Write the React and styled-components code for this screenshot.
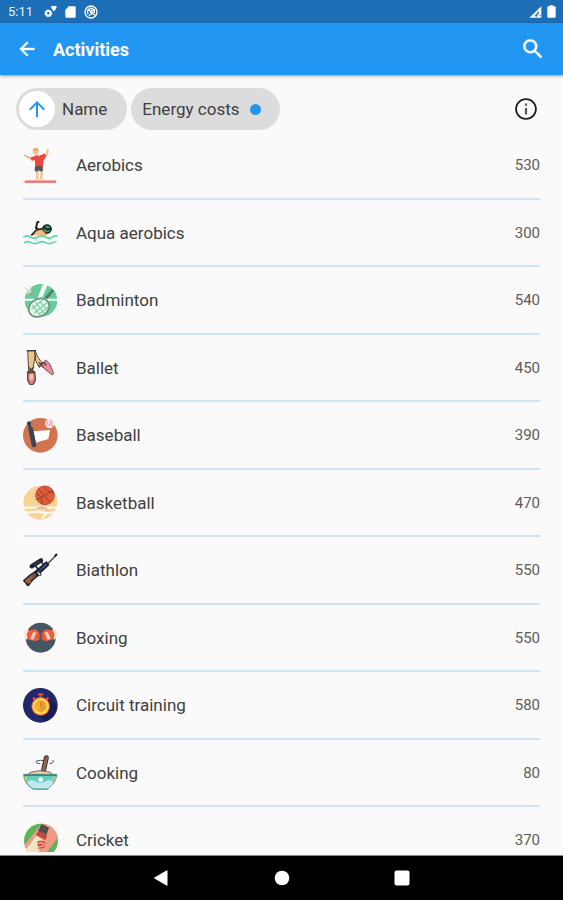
import React from "react";
import styled, { createGlobalStyle } from "styled-components";

const ACTIVITIES = [
  { name: "Aerobics", energy: 530, icon: AerobicsIcon },
  { name: "Aqua aerobics", energy: 300, icon: AquaIcon },
  { name: "Badminton", energy: 540, icon: BadmintonIcon },
  { name: "Ballet", energy: 450, icon: BalletIcon },
  { name: "Baseball", energy: 390, icon: BaseballIcon },
  { name: "Basketball", energy: 470, icon: BasketballIcon },
  { name: "Biathlon", energy: 550, icon: BiathlonIcon },
  { name: "Boxing", energy: 550, icon: BoxingIcon },
  { name: "Circuit training", energy: 580, icon: CircuitIcon },
  { name: "Cooking", energy: 80, icon: CookingIcon },
  { name: "Cricket", energy: 370, icon: CricketIcon },
];

export default function App() {
  return (
    <Screen>
      <GlobalStyle />
      <StatusBar>
        <Clock>5:11</Clock>
        <GearsIcon />
        <SdCardIcon />
        <BlockedIcon />
        <Spacer />
        <SignalIcon />
        <BatteryIcon />
      </StatusBar>
      <AppBar>
        <IconButton type="button" aria-label="Back">
          <svg width="22" height="22" viewBox="0 0 24 24" fill="currentColor" stroke="currentColor" strokeWidth="0.5">
            <path d="M20 11H7.83l5.59-5.59L12 4l-8 8 8 8 1.41-1.41L7.83 13H20v-2z" />
          </svg>
        </IconButton>
        <Title>Activities</Title>
        <IconButton type="button" aria-label="Search">
          <svg width="26" height="26" viewBox="0 0 24 24" fill="currentColor" stroke="currentColor" strokeWidth="0.3">
            <path d="M15.5 14h-.79l-.28-.27A6.471 6.471 0 0 0 16 9.5 6.5 6.5 0 1 0 9.5 16c1.61 0 3.09-.59 4.23-1.57l.27.28v.79l5 4.99L20.49 19l-4.99-5zm-6 0C7.01 14 5 11.99 5 9.5S7.01 5 9.5 5 14 7.01 14 9.5 11.99 14 9.5 14z" />
          </svg>
        </IconButton>
      </AppBar>
      <Filters>
        <Chip type="button" $avatar>
          <ChipAvatar>
            <svg width="24" height="24" viewBox="0 0 24 24" fill="currentColor">
              <path d="M4 12l1.41 1.41L11 7.83V20h2V7.83l5.58 5.59L20 12l-8-8-8 8z" />
            </svg>
          </ChipAvatar>
          Name
        </Chip>
        <Chip type="button">
          Energy costs
          <Dot />
        </Chip>
        <Spacer />
        <IconButton type="button" aria-label="Information" $dark>
          <svg width="26" height="26" viewBox="0 0 24 24" fill="currentColor">
            <path d="M11 7h2v2h-2zm0 4h2v6h-2z" fill="#555" />
            <path d="M12 2C6.48 2 2 6.48 2 12s4.48 10 10 10 10-4.480 10-10S17.520 2 12 2zm0 18.300c-4.600 0-8.300-3.700-8.300-8.300s3.700-8.300 8.300-8.300 8.300 3.700 8.300 8.300-3.700 8.300-8.300 8.300z" />
          </svg>
        </IconButton>
      </Filters>
      <List>
        {ACTIVITIES.map(({ name, energy, icon: Icon }) => (
          <Row key={name}>
            <Icon />
            <Name>{name}</Name>
            <Energy>{energy}</Energy>
          </Row>
        ))}
      </List>
      <NavBar>
        <NavButton type="button" aria-label="Back">
          <svg width="18" height="18" viewBox="0 0 18 18" fill="#fff">
            <path d="M14.500 2v14q0 1-1 .5L1.500 9.600q-1-.6 0-1.200L13.500 1.500q1-.5 1 .5z" />
          </svg>
        </NavButton>
        <NavButton type="button" aria-label="Home">
          <svg width="18" height="18" viewBox="0 0 18 18" fill="#fff">
            <circle cx="9" cy="9" r="7.300" />
          </svg>
        </NavButton>
        <NavButton type="button" aria-label="Overview">
          <svg width="18" height="18" viewBox="0 0 18 18" fill="#fff">
            <rect x="1.500" y="1.500" width="15" height="15" rx="2" />
          </svg>
        </NavButton>
      </NavBar>
    </Screen>
  );
}

/* Status bar glyphs */

function GearsIcon() {
  return (
    <svg width="13" height="13" viewBox="0 0 39 39" fill="none" stroke="#fff">
      <circle cx="13" cy="25" r="7" strokeWidth="6" />
      <circle cx="13" cy="25" r="10.500" strokeWidth="3" strokeDasharray="5 4" />
      <path d="M21 4l14-1 3 3-4 8-5 4-5-7z" fill="#fff" strokeWidth="1" />
    </svg>
  );
}

function SdCardIcon() {
  return (
    <svg width="11" height="12" viewBox="0 0 33 36" fill="#fff">
      <path d="M11 1h18q3 0 3 3v28q0 3-3 3H4q-3 0-3-3V12z" />
    </svg>
  );
}

function BlockedIcon() {
  return (
    <svg width="14" height="14" viewBox="0 0 42 42" fill="none" stroke="#fff" strokeWidth="4">
      <circle cx="21" cy="21" r="18" />
      <path d="M11 11l22 20M11 27V17l7-5M17 9l14 5M31 24v-9l-9 3M14 31l9-4-4-7" />
    </svg>
  );
}

function SignalIcon() {
  return (
    <svg width="13" height="12" viewBox="0 0 39 36">
      <path d="M1 35L37 1v34z" fill="#fff" />
      <path d="M18 30L29 17v6l-5 3v5zM30 28h7" stroke="#1c6fb6" strokeWidth="2" fill="#1c6fb6" />
    </svg>
  );
}

function BatteryIcon() {
  return (
    <svg width="9" height="13" viewBox="0 0 27 39" fill="#fff">
      <path d="M8 1h11v3h4q3 0 3 3v28q0 3-3 3H4q-3 0-3-3V7q0-3 3-3h4z" />
    </svg>
  );
}

/* Activity pictures, all on a 105 unit square */

function Picture({ children }) {
  return (
    <svg width="35" height="35" viewBox="0 0 105 105" fill="none" aria-hidden="true">
      {children}
    </svg>
  );
}

function AerobicsIcon() {
  return (
    <Picture>
      <path d="M28 32L15 27 6 22M63 29l10-12 1-11" stroke="#f5b887" strokeWidth="6" strokeLinecap="round" />
      <path d="M42 67l1 28M56 67l-1 28" stroke="#f7bd8b" strokeWidth="7" />
      <path d="M36 96h13M52 96h12" stroke="#f7f1ea" strokeWidth="4" />
      <path d="M22 30l12-6 10-3h12l8-5 6 8-8 13-2 20H37l-2-21-9 2z" fill="#e84a40" />
      <path d="M43 20l5 7 5-7z" fill="#f7bd8b" />
      <path d="M36 55h23l1 15H49l-1-6-2 6H35z" fill="#55545a" />
      <rect x="30" y="1" width="16" height="19" rx="7" fill="#f8c392" />
      <path d="M29 8q0-8 9-8 9 0 9 8-9-3-18 0z" fill="#e8a16c" />
      <rect x="5" y="97" width="94" height="8" fill="#ee7f7c" />
    </Picture>
  );
}

function AquaIcon() {
  return (
    <Picture>
      <path d="M25 60l14-13 19-6 19 13-8 9-42-2z" fill="#f0bd83" />
      <path d="M45 42l-6-3 4-17 6-2" stroke="#232323" strokeWidth="6" />
      <path d="M25 61l15-16 18-4" stroke="#222" strokeWidth="5" />
      <circle cx="72" cy="42" r="12" fill="#3f9877" stroke="#1d2927" strokeWidth="5" />
      <path d="M62 35l10 9 13-3" stroke="#171d1d" strokeWidth="5" />
      <path d="M57 46l10 6-4 6z" fill="#e7a978" />
      <path d="M1 66q12-7 22 0t22 0 22 0 22 0q8-5 15-3M3 83q12-6 21 0t22 0 22 0 22 0q6-4 11-2" stroke="#63d5a8" strokeWidth="5" />
      <path d="M35 73l12 4M77 75l9-2" stroke="#b4e9d6" strokeWidth="4" />
    </Picture>
  );
}

function BadmintonIcon() {
  return (
    <Picture>
      <circle cx="54" cy="52" r="49" fill="#65cd98" />
      <path d="M0 50h104" stroke="#f8fffb" strokeWidth="6" />
      <path d="M61 0h15L57 45H44z" fill="#f8fffb" />
      <path d="M2 12l20-9 4 26-12 5z" fill="#f5f5f3" opacity="0.6" />
      <path d="M6 14l10 11M22 26l4 9" stroke="#e8b6a9" strokeWidth="3" />
      <circle cx="25" cy="32" r="4" fill="#cf8b76" />
      <path d="M69 45l21-24" stroke="#4d6c61" strokeWidth="8" />
      <path d="M72 40l15-17" stroke="#79978b" strokeWidth="3" />
      <ellipse cx="48" cy="74" rx="32" ry="26" transform="rotate(-32 48 74)" fill="#e9f8ef" stroke="#718d82" strokeWidth="5" />
      <path d="M28 66l24 31M37 58l27 33M49 54l22 26M25 79l34-28M33 91l41-33M47 95l28-23" stroke="#7cd4a8" strokeWidth="4" />
    </Picture>
  );
}

function BalletIcon() {
  return (
    <Picture>
      <path d="M14 2h22l-1 24-6 35H17z" fill="#efc48d" stroke="#5d4a3d" strokeWidth="3" />
      <path d="M36 2l9 20 14 20-10 11-11-21z" fill="#efc48d" stroke="#5d4a3d" strokeWidth="3" />
      <path d="M11 2h28" stroke="#45372f" strokeWidth="4" />
      <path d="M56 46l12-16 12 11 11 27q1 9-6 5L62 54z" fill="#e88ea0" stroke="#7a4a52" strokeWidth="3" />
      <path d="M47 48l14-11M47 37l14 15M62 36l8 10" stroke="#54372f" strokeWidth="4" />
      <path d="M14 66h21l2 24-6 12q-6 4-11 0l-6-12z" fill="#e08496" stroke="#633e45" strokeWidth="4" />
      <path d="M16 52l18 14M33 52L15 67M15 68h20" stroke="#573d36" strokeWidth="4" />
      <path d="M20 73h10l1 12-5 5-6-4z" fill="#f5c896" />
    </Picture>
  );
}

function BaseballIcon() {
  return (
    <Picture>
      <circle cx="52" cy="52" r="52" fill="#d37450" />
      <path d="M32 40l49-4-5 27-38 11z" fill="#fff" />
      <path d="M23 33l10 48" stroke="#3a4652" strokeWidth="14" strokeLinecap="round" />
      <path d="M17 15l6 20" stroke="#3a4652" strokeWidth="9" />
      <circle cx="18" cy="16" r="6" fill="#344550" />
      <circle cx="80" cy="17" r="14" fill="#f7e2e2" />
      <path d="M72 8q4 14-5 17M84 5q-3 14 8 22M76 22l8-5" stroke="#e596a3" strokeWidth="3" />
    </Picture>
  );
}

function BasketballIcon() {
  return (
    <Picture>
      <circle cx="52" cy="53" r="51" fill="#f8d394" />
      <path d="M2 68h100M10 83l36-3 28 5 25-4M58 100l11-15" stroke="#fff8ee" strokeWidth="7" />
      <path d="M38 69l16-5 14 1 9 9-22 5z" fill="#e5c0a9" />
      <path d="M46 74l11 3 9-5" stroke="#f6ded0" strokeWidth="4" />
      <circle cx="66" cy="31" r="28" fill="#df5c3c" stroke="#c04f39" strokeWidth="3" />
      <path d="M42 44l48-27M47 13q13 14 34 39M41 27q16 4 17 30M62 4q9 16 31 20" stroke="#97402f" strokeWidth="3" />
    </Picture>
  );
}

function BiathlonIcon() {
  return (
    <Picture>
      <path d="M71 35L101 5" stroke="#44434a" strokeWidth="4" />
      <path d="M95 10l7-7" stroke="#222" strokeWidth="6" />
      <path d="M2 83l20-18 20-12 9 10-21 17-14 18q-5 0-6-6z" fill="#7d4e37" stroke="#27201f" strokeWidth="4" />
      <path d="M8 88l20-18M12 79l12 11" stroke="#a56d50" strokeWidth="4" />
      <path d="M37 57l33-29 6 8-24 22-9 9z" fill="#2d4274" stroke="#17192a" strokeWidth="5" />
      <path d="M49 57l6 9-6 2-8-8" fill="#d9dadd" stroke="#39383b" strokeWidth="3" />
      <path d="M26 40l28-18" stroke="#20222c" strokeWidth="13" strokeLinecap="round" />
      <path d="M33 36l17-11" stroke="#4b5260" strokeWidth="3" />
      <path d="M38 39l7 10M55 27l8 10" stroke="#242529" strokeWidth="5" />
      <path d="M57 46l15-14" stroke="#3e5b9c" strokeWidth="4" />
    </Picture>
  );
}

function BoxingIcon() {
  return (
    <Picture>
      <circle cx="53" cy="53" r="45" fill="#465663" />
      <path d="M0 38l13-14 9 15-10 21-8-10zM105 38L92 24l-9 15 10 21 8-10z" fill="#fbe9dd" />
      <path d="M17 31l22-3 12 13v16l-12 7-25-6-3-16z" fill="#ed5f40" />
      <path d="M89 31l-22-3-12 13v16l12 7 25-6 3-16z" fill="#ed5f40" />
      <path d="M30 37l-8 20 9 2 9-22zM65 37l9 22 9-2-8-20z" fill="#fbd3c4" />
      <path d="M50 37l-3 20M56 37l3 20" stroke="#a94437" strokeWidth="3" />
    </Picture>
  );
}

function CircuitIcon() {
  return (
    <Picture>
      <circle cx="52" cy="52" r="52" fill="#20286b" />
      <path d="M72 28l30 27q-3 33-34 45L33 77z" fill="#181d55" />
      <path d="M45 19h16M53 18v13M30 29l7 7M76 29l-7 7" stroke="#dc493c" strokeWidth="7" />
      <circle cx="53" cy="55" r="28" fill="#e9573b" />
      <circle cx="53" cy="55" r="25" fill="#ffd957" />
      <circle cx="53" cy="55" r="18" fill="#f5aa30" />
      <path d="M53 38v34q14-3 15-17-1-14-15-17z" fill="#e99a2c" />
      <path d="M53 43v14" stroke="#b8752c" strokeWidth="3" />
    </Picture>
  );
}

function CookingIcon() {
  return (
    <Picture>
      <path d="M38 19q13-6 32-1M88 15q10 7-8 11M42 21q-6 4 10 5" stroke="#4f5459" strokeWidth="3" />
      <path d="M70 8l-8 36" stroke="#3d3430" strokeWidth="15" strokeLinecap="round" />
      <path d="M70 9l-8 35" stroke="#8f6552" strokeWidth="9" strokeLinecap="round" />
      <path d="M14 59q8-10 25-10 10-5 22 0 21-1 29 10z" fill="#efcdaa" stroke="#79675a" strokeWidth="3" />
      <path d="M2 58h99q-1 23-22 39l-6 6H31l-8-6Q3 83 2 58z" fill="#62cfc0" stroke="#5f8985" strokeWidth="3" />
      <path d="M12 80q13-8 27 0 13 6 26 0 15-8 27 0-6 14-19 20H33q-15-6-21-20z" fill="#c4e6f1" />
      <path d="M3 61h97" stroke="#3d837c" strokeWidth="4" />
      <circle cx="53" cy="74" r="7" fill="#f5ffff" />
      <path d="M7 66l3 10M96 66l-3 10" stroke="#edbe4f" strokeWidth="7" />
      <path d="M31 103h43" stroke="#8c9ca8" strokeWidth="3" />
    </Picture>
  );
}

function CricketIcon() {
  return (
    <Picture>
      <circle cx="54" cy="53" r="51" fill="#5db558" />
      <path d="M5 65L55 2q40 0 49 42L60 104Q18 103 5 65z" fill="#f09a85" />
      <path d="M14 100L8 80l32-43 20 14-20 55q-16 0-26-6z" fill="#f1e5c5" />
      <path d="M39 36l7-11 27 14-6 12z" fill="#c2483b" />
      <path d="M45 24L56 3l22 11-8 23z" fill="#4b4a4a" />
      <path d="M53 12l20 11M48 21l23 12" stroke="#68605d" strokeWidth="3" />
      <path d="M42 57q12-9 25 1l-2 16-19 3z" fill="#d24a3e" />
      <path d="M42 62l13-3 10 6M45 73l18-5" stroke="#f4b3a2" strokeWidth="4" />
    </Picture>
  );
}

const GlobalStyle = createGlobalStyle`
  * {
    box-sizing: border-box;
  }
  body {
    margin: 0;
    background: #fafafa;
    color: #404040;
    font-family: Roboto, "Liberation Sans", sans-serif;
  }
  button {
    font: inherit;
    color: inherit;
    border: 0;
    padding: 0;
    background: none;
    cursor: pointer;
  }
  svg {
    display: block;
    flex: none;
  }
`;

const Screen = styled.div`
  display: flex;
  flex-direction: column;
  height: 100vh;
`;

const Spacer = styled.span`
  flex: 1;
`;

const StatusBar = styled.div`
  display: flex;
  align-items: center;
  gap: 8px;
  flex: none;
  height: 23px;
  padding: 0 7px 0 8px;
  background: #1c6fb6;
  color: #e8f1f8;

  svg:last-child {
    margin-left: -3px;
  }
`;

const Clock = styled.span`
  width: 28px;
  font-size: 13px;
  line-height: 24px;
`;

const AppBar = styled.header`
  display: flex;
  align-items: center;
  gap: 15px;
  flex: none;
  height: 52px;
  padding: 0 17px 0 16px;
  background: #2196f3;
  color: #fff;
  box-shadow: 0 1px 3px rgba(0, 0, 0, 0.4);
`;

const Title = styled.h1`
  flex: 1;
  margin: 0;
  font-size: 18px;
  font-weight: 700;
`;

const IconButton = styled.button`
  color: ${(p) => (p.$dark ? "#1c1c1c" : "#fff")};
`;

const Filters = styled.div`
  display: flex;
  align-items: center;
  gap: 4px;
  flex: none;
  padding: 13px 24px 2px 16px;
`;

const Chip = styled.button`
  display: flex;
  align-items: center;
  gap: ${(p) => (p.$avatar ? "7px" : "10px")};
  height: 42px;
  padding: ${(p) => (p.$avatar ? "0 20px 0 3px" : "0 19px 0 11px")};
  border-radius: 21px;
  background: #dcdcdc;
  font-size: 17px;
`;

const ChipAvatar = styled.span`
  display: grid;
  place-items: center;
  width: 36px;
  height: 36px;
  border-radius: 50%;
  background: #fff;
  color: #2196f3;
`;

const Dot = styled.span`
  width: 11px;
  height: 11px;
  border-radius: 50%;
  background: #2196f3;
`;

const List = styled.ul`
  flex: 1;
  min-height: 0;
  overflow: hidden;
  margin: 0 0 3px;
  padding: 0 23px;
  list-style: none;
`;

const Row = styled.li`
  display: flex;
  align-items: center;
  gap: 18px;
  height: 68px;
  border-bottom: 2px solid #cfe3f5;

  &:nth-child(even) {
    height: 67px;
  }
`;

const Name = styled.span`
  flex: 1;
  font-size: 17px;
`;

const Energy = styled.span`
  font-size: 15px;
  color: #5c5c5c;
`;

const NavBar = styled.nav`
  display: flex;
  justify-content: center;
  gap: 102px;
  flex: none;
  height: 45px;
  border-top: 1px solid #888;
  background: #000;
`;

const NavButton = styled.button`
  display: grid;
  place-items: center;
  width: 18px;
`;
